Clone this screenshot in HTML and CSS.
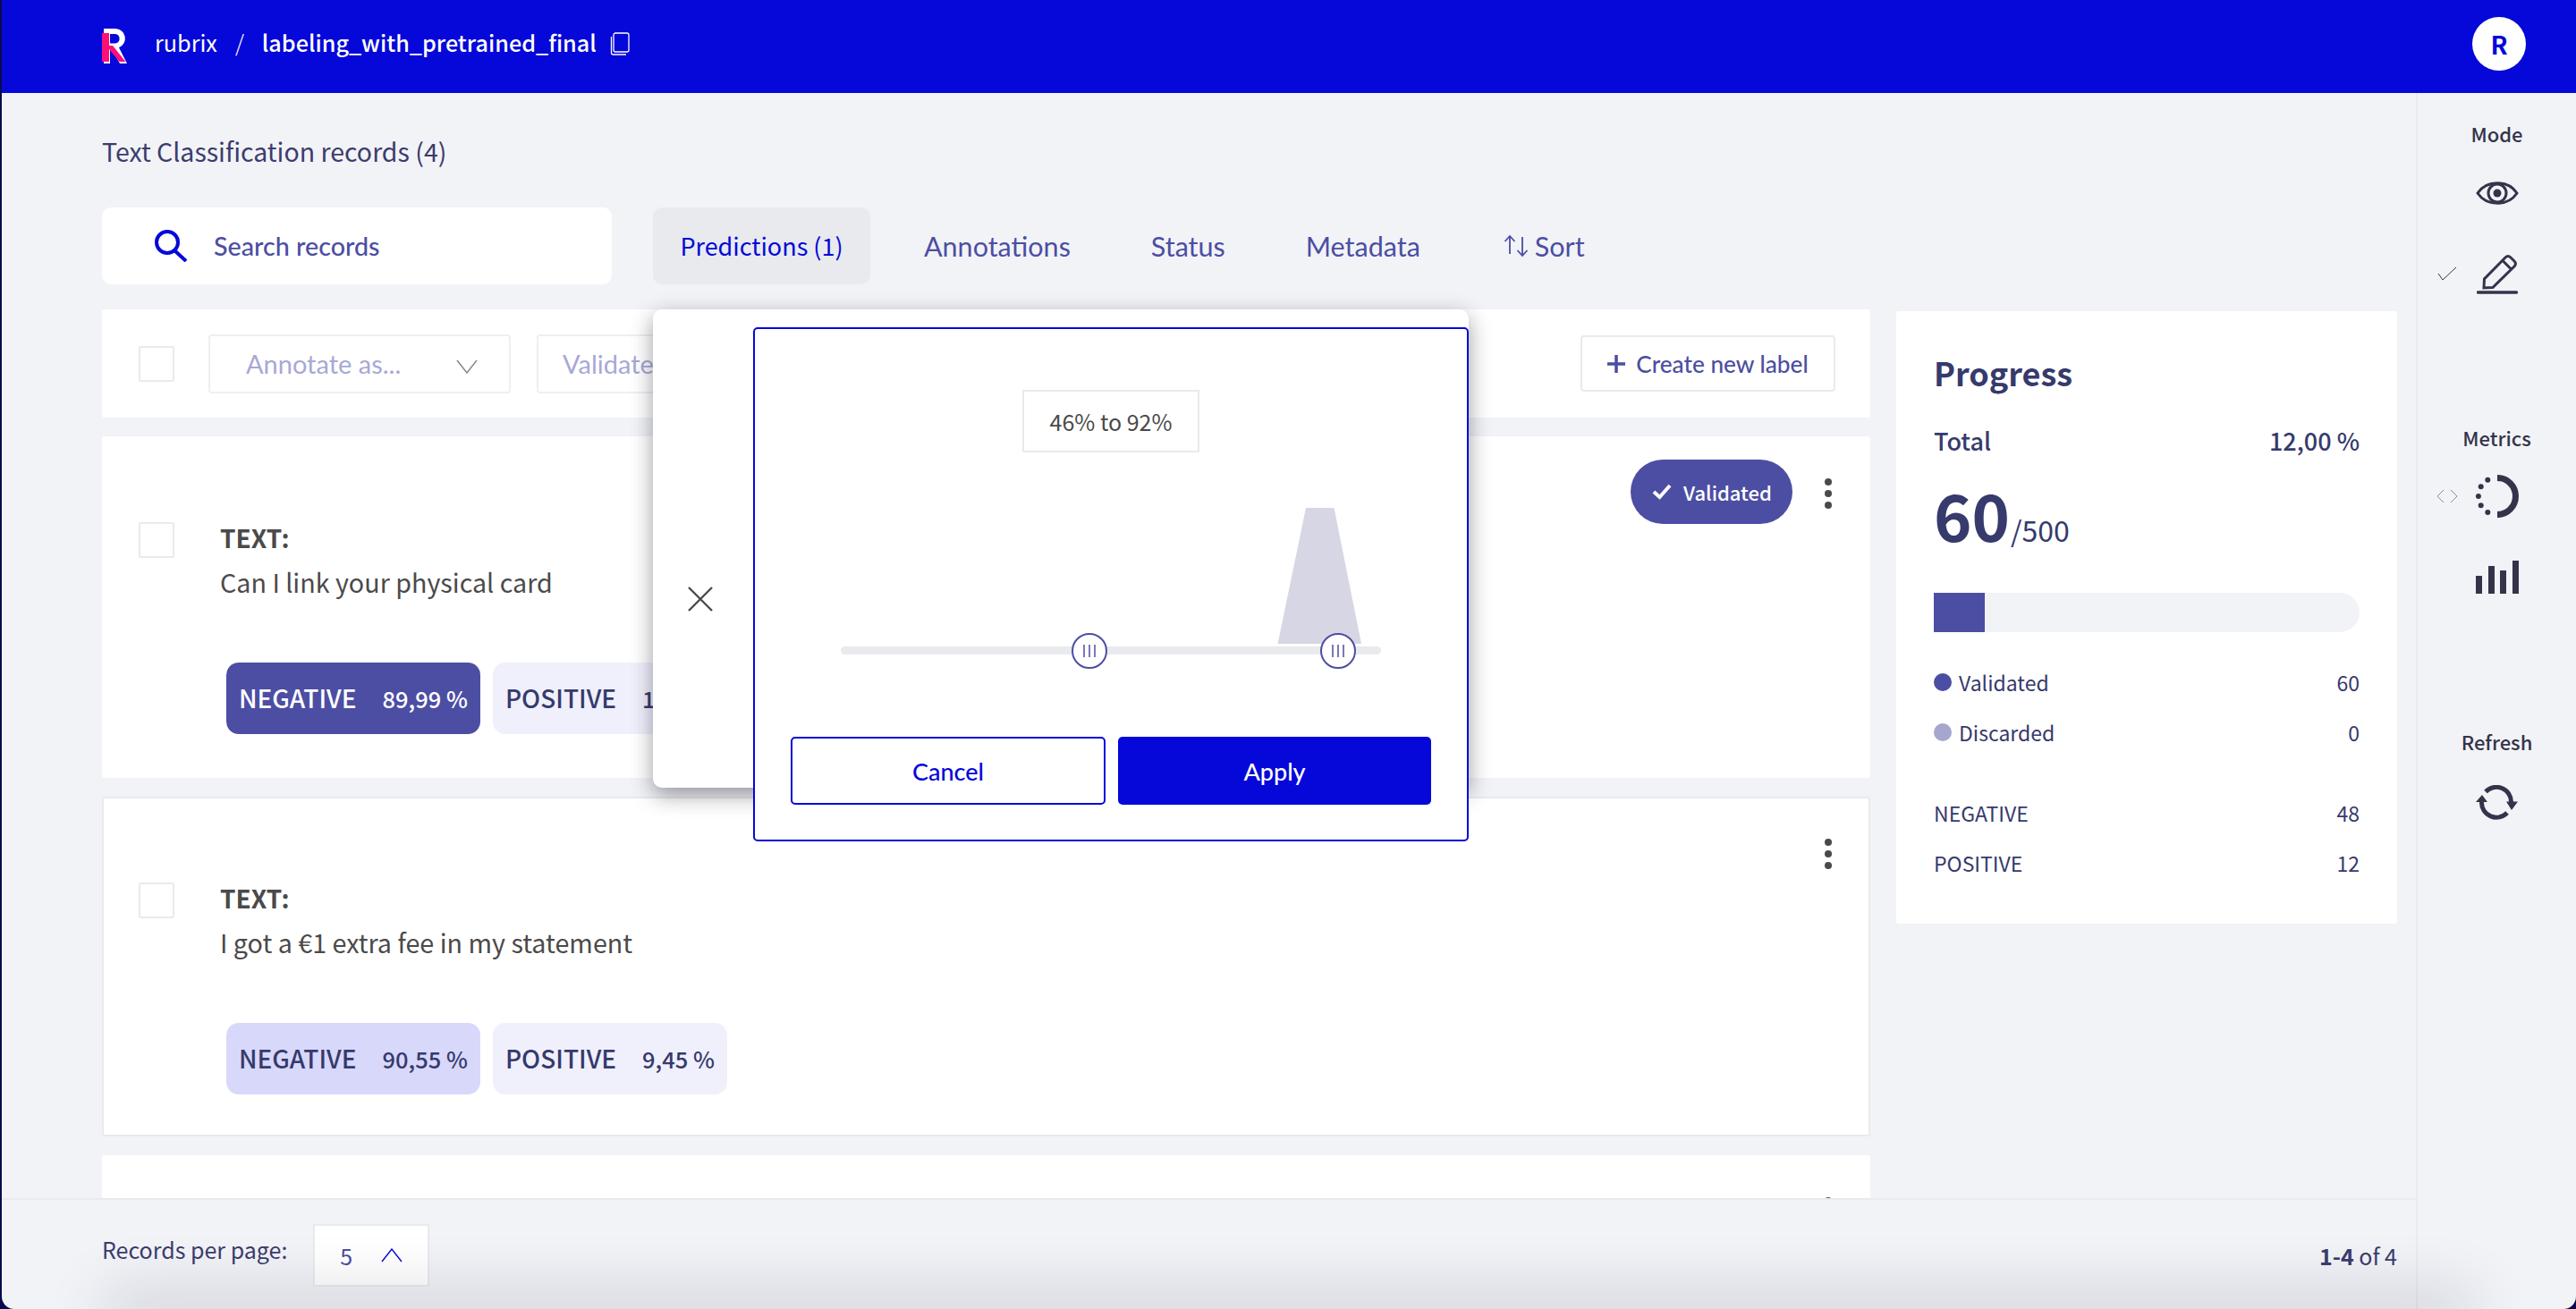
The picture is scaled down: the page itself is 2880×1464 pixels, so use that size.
FILE: index.html
```html
<!DOCTYPE html>
<html lang="en">
<head>
<meta charset="utf-8">
<title>rubrix</title>
<link rel="stylesheet" href="styles.css">
</head>
<body>
<div class="app">
  <header class="topbar">
    <svg class="logo" width="30" height="40" viewBox="0 0 30 40"><path fill="#fff" fill-rule="evenodd" d="M3 0H16a11 11 0 0 1 4 21.2L29 39H21L11.500 22H10V39H3ZM10 6V16.500H16a5.300 5.300 0 0 0 0-10.500Z"/><path fill="#ff0f78" d="M1 5H9V37H1ZM9 19H13L27.500 37H20.500L9 23Z"/></svg>
    <span class="crumb">rubrix</span>
    <span class="crumb slash">/</span>
    <span class="crumb strong">labeling_with_pretrained_final</span>
    <svg class="copy" width="22" height="26" viewBox="0 0 22 26" fill="none" stroke="#fff" stroke-width="1.300"><rect x="4" y="1" width="17" height="21" rx="2"/><path d="M1.500 5V23a2 2 0 0 0 2 2H18"/></svg>
    <span class="avatar">R</span>
  </header>
  <div class="layout">
    <main class="main">
      <div class="content">
        <h1 class="title">Text Classification records (4)</h1>
        <div class="filters">
          <div class="search">
            <svg width="38" height="36" viewBox="0 0 38 36" fill="none" stroke="#0508d9" stroke-width="4"><circle cx="15" cy="14" r="12"/><path d="M23 23L36 35"/></svg>
            <span>Search records</span>
          </div>
          <span class="filter active">Predictions (1)</span>
          <span class="filter">Annotations</span>
          <span class="filter">Status</span>
          <span class="filter">Metadata</span>
          <span class="filter sort">
            <svg width="28" height="26" viewBox="0 0 28 26" fill="none" stroke="#4c4ea3" stroke-width="1.800"><path d="M7 22V2M1.500 8L7 2L12.500 8M21 3V24M15.500 18L21 24L26.500 18"/></svg>
            Sort
          </span>
        </div>
        <div class="columns">
          <div class="list">
            <div class="toolbar">
              <span class="check"></span>
              <div class="select annotate"><span>Annotate as...</span>
                <svg class="chev" width="24" height="16" viewBox="0 0 24 16" fill="none" stroke="#888" stroke-width="1.500"><path d="M1 1L12 15L23 1"/></svg>
              </div>
              <div class="select validate"><span>Validate</span></div>
              <div class="create"><svg width="20" height="20" viewBox="0 0 20 20" fill="none" stroke="#4c4ea3" stroke-width="3.500"><path d="M10 0V20M0 10H20"/></svg><span>Create new label</span></div>
            </div>
            <article class="record first">
              <span class="check"></span>
              <div class="record-body">
                <div class="field">TEXT:</div>
                <div class="value">Can I link your physical card</div>
                <div class="chips">
                  <span class="chip on"><b>NEGATIVE</b><i>89,99 %</i></span>
                  <span class="chip"><b>POSITIVE</b><i>10,01 %</i></span>
                </div>
              </div>
              <div class="actions">
                <span class="pill"><svg width="22" height="18" viewBox="0 0 22 18" fill="none" stroke="#fff" stroke-width="4"><path d="M2 9L8.500 15L20 2"/></svg>Validated</span>
                <span class="dots"><i></i><i></i><i></i></span>
              </div>
            </article>
            <article class="record second">
              <span class="check"></span>
              <div class="record-body">
                <div class="field">TEXT:</div>
                <div class="value">I got a €1 extra fee in my statement</div>
                <div class="chips">
                  <span class="chip mid"><b>NEGATIVE</b><i>90,55 %</i></span>
                  <span class="chip"><b>POSITIVE</b><i>9,45 %</i></span>
                </div>
              </div>
              <div class="actions">
                <span class="dots"><i></i><i></i><i></i></span>
              </div>
            </article>
            <article class="record third">
              <div class="actions">
                <span class="dots"><i></i><i></i><i></i></span>
              </div>
            </article>
          </div>
          <aside class="progress">
            <h2>Progress</h2>
            <div class="row total"><span>Total</span><span>12,00 %</span></div>
            <div class="count"><b>60</b><span>/500</span></div>
            <div class="bar"><div class="bar-fill"></div></div>
            <div class="row stat"><span class="legend"><i class="dot"></i>Validated</span><span>60</span></div>
            <div class="row stat"><span class="legend"><i class="dot light"></i>Discarded</span><span>0</span></div>
            <div class="row stat labels"><span>NEGATIVE</span><span>48</span></div>
            <div class="row stat"><span>POSITIVE</span><span>12</span></div>
          </aside>
        </div>
      </div>
      <footer class="footer">
        <span class="per-page">Records per page:</span>
        <div class="page-select"><span>5</span>
          <svg width="24" height="16" viewBox="0 0 24 16" fill="none" stroke="#0508d9" stroke-width="1.400"><path d="M1 15L12 1L23 15"/></svg>
        </div>
        <span class="pager"><b>1-4</b> of 4</span>
      </footer>
    </main>
    <aside class="sidebar">
      <span class="side-label">Mode</span>
      <svg class="eye" width="48" height="28" viewBox="0 0 48 28" fill="none" stroke="#33344a" stroke-width="3"><path d="M2 14C12 -1 36 -1 46 14C36 29 12 29 2 14Z"/><circle cx="24" cy="14" r="10"/><circle cx="24" cy="14" r="4.500" fill="#33344a" stroke="none"/></svg>
      <div class="side-icon pencil">
        <svg class="mark" width="22" height="16" viewBox="0 0 22 16" fill="none" stroke="#33344a" stroke-width="1"><path d="M1 8L6 15L21 1"/></svg>
        <svg width="46" height="46" viewBox="0 0 46 46" fill="none" stroke="#33344a" stroke-width="3"><path d="M8 39L8.500 29L32 5Q35 2 38 5L42 9Q45 12 42 15L18 38.500ZM29 8.500L38.500 18"/><path d="M1.500 44H44.500" stroke-width="3.500" stroke-linecap="round"/></svg>
      </div>
      <span class="side-label metrics">Metrics</span>
      <div class="side-icon ring">
        <svg class="mark code" width="24" height="16" viewBox="0 0 24 16" fill="none" stroke="#8a8a98" stroke-width="1"><path d="M8 1L1 8L8 15M16 1L23 8L16 15"/></svg>
        <svg width="48" height="48" viewBox="0 0 48 48" fill="#33344a"><path d="M24 3.500A20.500 20.500 0 0 1 24 44.500" fill="none" stroke="#33344a" stroke-width="7"/><circle cx="13.300" cy="5.700" r="3"/><circle cx="5.700" cy="13.300" r="3"/><circle cx="2.900" cy="24" r="3"/><circle cx="5.700" cy="34.300" r="3"/><circle cx="13.300" cy="42" r="3"/></svg>
      </div>
      <svg class="bars" width="48" height="37" viewBox="0 0 48 37" fill="#33344a"><rect x="0" y="17" width="7" height="20"/><rect x="14" y="6" width="7" height="31"/><rect x="27" y="11" width="7" height="26"/><rect x="41" y="0" width="7" height="37"/></svg>
      <span class="side-label refresh">Refresh</span>
      <svg class="refresh-icon" width="48" height="40" viewBox="0 0 48 40" fill="none" stroke="#33344a" stroke-width="5"><path d="M11 7.500A16.500 16.500 0 0 1 39.500 19"/><path d="M6.500 19A16.500 16.500 0 0 0 35 31"/><path fill="#33344a" stroke="none" d="M0 19H13L7 11ZM34 18.500H47L40 28Z"/></svg>
    </aside>
  </div>
  <section class="popup">
    <svg class="close" width="28" height="28" viewBox="0 0 28 28" fill="none" stroke="#4a4a4a" stroke-width="2.400"><path d="M1 1L27 27M27 1L1 27"/></svg>
    <div class="range">
      <div class="range-value">46% to 92%</div>
      <svg class="chart" width="604" height="182" viewBox="0 0 604 182">
        <polygon points="520,0 551.500,0 582,152 488.500,152" fill="#d7d6e4"/>
        <rect x="0" y="155" width="604" height="9" rx="4.500" fill="#e9eaee"/>
        <g fill="#fff" stroke="#4c4ea3" stroke-width="2">
          <circle cx="278" cy="160" r="19"/><circle cx="556" cy="160" r="19"/>
        </g>
        <path d="M272 153V167M278 153V167M284 153V167M550 153V167M556 153V167M562 153V167" stroke="#4c4ea3" stroke-width="1.500" fill="none"/>
      </svg>
      <div class="range-buttons">
        <span class="btn cancel">Cancel</span>
        <span class="btn apply">Apply</span>
      </div>
    </div>
  </section>
  <div class="bottom-shade"></div>
</div>
</body>
</html>
```
FILE: styles.css
```css
* { box-sizing: border-box; }
html, body { margin: 0; height: 100%; }
body {
  background: #0a0a4e;
  overflow: hidden;
  font-family: "Noto Sans CJK SC", "Source Sans Pro", "Noto Sans", sans-serif;
  color: #363a6c;
}
.app {
  position: relative;
  margin-left: 2px;
  height: 1464px;
  display: flex;
  flex-direction: column;
  background: #f2f3f7;
  overflow: hidden;
  border-radius: 0 0 14px 14px;
}

/* top bar */
.topbar {
  flex: 0 0 104px;
  display: flex;
  align-items: center;
  padding: 0 0 6px 111px;
  background: #0508d9;
  color: #fff;
}
.logo { margin-right: 30px; margin-top: 6px; }
.crumb { margin-top: -4px; font-size: 25.200px; line-height: 40px; color: #fff; font-weight: 400; }
.slash { margin-left: 20px; margin-right: 20px; font-weight: 300; }
.strong { font-weight: 500; }
.copy { margin-left: 15px; }
.avatar {
  margin-left: auto;
  margin-right: 56px;
  width: 60px;
  height: 60px;
  border-radius: 50%;
  background: #fff;
  color: #0508d9;
  font-size: 28px;
  font-weight: 700;
  line-height: 60px;
  text-align: center;
}

/* main */
.layout { flex: 1; display: flex; min-height: 0; }
.main { flex: 1; min-width: 0; display: flex; flex-direction: column; }
.content { flex: 1; min-height: 0; overflow: hidden; padding: 45px 21px 0 112px; }
.title { margin: 0; font-size: 28.500px; line-height: 40px; font-weight: 400; color: #3b3c6e; }
.filters { margin-top: 43px; height: 86px; display: flex; align-items: center; font-family: Lato, "Noto Sans", sans-serif; }
.search {
  width: 570px;
  height: 86px;
  padding-left: 58px;
  display: flex;
  align-items: center;
  gap: 29px;
  background: #fff;
  border-radius: 10px;
  font-size: 28.700px;
  font-weight: 500;
  color: #4c4ea3;
}
.filter {
  font-size: 30.500px;
  line-height: 86px;
  color: #4c4ea3;
  margin-left: 90px;
  white-space: nowrap;
  display: flex;
  align-items: center;
}
.filter.active {
  margin-left: 46px;
  width: 243px;
  justify-content: center;
  background: #e9eaee;
  border-radius: 10px;
  color: #0508d9;
  font-family: "Noto Sans CJK SC", sans-serif;
  font-size: 27px;
}
.filter.active + .filter { margin-left: 60px; }
.filter.sort { margin-left: 93px; gap: 7px; }
.columns {
  margin-top: 28px;
  display: grid;
  grid-template-columns: 1977px 560px;
  column-gap: 29px;
  align-items: start;
}
.list { display: grid; row-gap: 21px; }

/* toolbar */
.toolbar {
  height: 121px;
  padding: 0 39px 0 41px;
  display: flex;
  align-items: center;
  background: #fff;
  border-radius: 3px;
  font-family: Lato, "Noto Sans", sans-serif;
}
.check {
  flex: 0 0 40px;
  width: 40px;
  height: 40px;
  border: 2px solid #e9eaee;
  border-radius: 2px;
  background: #fff;
}
.select {
  height: 66px;
  display: flex;
  align-items: center;
  justify-content: space-between;
  border: 2px solid #eeeff3;
  border-radius: 4px;
  font-size: 29px;
  color: #a7a8d6;
}
.annotate { width: 338px; margin-left: 38px; padding: 0 35px 0 40px; }
.chev { margin-top: 6px; }
.validate { width: 300px; margin-left: 29px; padding-left: 27px; }
.create {
  margin-left: auto;
  width: 285px;
  height: 63px;
  display: flex;
  align-items: center;
  justify-content: center;
  gap: 12px;
  border: 2px solid #e9eaee;
  border-radius: 4px;
  font-size: 26.200px;
  font-weight: 500;
  color: #4c4ea3;
}

/* records */
.record {
  position: relative;
  display: flex;
  align-items: flex-start;
  background: #fff;
  border-radius: 3px;
  padding-left: 41px;
}
.record .check { margin-top: 96px; }
.record.first { height: 382px; }
.record.second { height: 380px; border: 2px solid #e9eaee; padding-left: 39px; }
.record.second .check { margin-top: 94px; }
.record.third { height: 60px; justify-content: flex-end; }
.record-body { flex: 1; padding: 93px 0 0 51px; }
.second .record-body { padding-top: 91px; }
.field { font-size: 28px; line-height: 40px; font-weight: 700; color: #4a4a4a; }
.value { margin-top: 10px; font-size: 28.700px; line-height: 40px; color: #4a4a4a; }
.chips { margin-top: 70px; margin-left: 7px; display: flex; gap: 14px; }
.chip {
  height: 80px;
  padding: 0 14px 2px;
  display: flex;
  align-items: center;
  gap: 29px;
  background: #f0f0fc;
  border-radius: 14px;
  font-size: 28px;
  color: #363a6c;
  white-space: nowrap;
}
.chip b { font-weight: 500; }
.chip i { font-style: normal; font-weight: 500; font-size: 25.500px; }
.chip.on { background: #4c4ea3; color: #fff; }
.chip.mid { background: #d8d8fb; }
.actions {
  height: 72px;
  margin-top: 26px;
  margin-right: 43px;
  display: flex;
  align-items: center;
  gap: 36px;
}
.second .actions { margin-top: 24px; margin-right: 41px; }
.pill {
  width: 181px;
  height: 72px;
  padding-left: 24px;
  display: flex;
  align-items: center;
  gap: 13px;
  background: #4c4ea3;
  border-radius: 36px;
  color: #fff;
  font-size: 22px;
  font-weight: 500;
}
.dots { margin-top: 3px; display: flex; flex-direction: column; gap: 5px; }
.dots i { width: 8px; height: 8px; border-radius: 50%; background: #4a4a4a; }

/* progress */
.progress {
  margin-top: 2px;
  height: 685px;
  padding: 42px 42px 0 42px;
  background: #fff;
  border-radius: 3px;
}
.progress h2 { margin: 0; font-size: 36px; line-height: 52px; font-weight: 700; color: #363a6c; }
.row { display: flex; justify-content: space-between; align-items: center; }
.total { margin-top: 33px; font-size: 27px; line-height: 36px; font-weight: 500; }
.count { margin-top: 22px; height: 84px; display: flex; align-items: baseline; line-height: 84px; }
.count b { font-size: 72px; font-weight: 700; }
.count span { font-size: 32px; margin-left: 1px; }
.bar { margin-top: 46px; height: 44px; border-radius: 0 22px 22px 0; background: #f2f3f7; overflow: hidden; }
.bar-fill { width: 57px; height: 100%; background: #4c4ea3; }
.stat { font-size: 23px; line-height: 36px; }
.bar + .stat { margin-top: 38px; }
.stat + .stat { margin-top: 20px; }
.stat.labels { margin-top: 54px; }
.legend { display: flex; align-items: center; gap: 8px; }
.dot { width: 20px; height: 20px; border-radius: 50%; background: #4c4ea3; }
.dot.light { background: #a6a6ce; }

/* footer */
.footer {
  flex: 0 0 124px;
  display: flex;
  align-items: flex-start;
  padding: 27px 21px 0 112px;
  border-top: 2px solid #e9eaee;
}
.per-page { margin-top: 8px; font-size: 25px; line-height: 40px; color: #3b3c6e; }
.page-select {
  margin-left: 29px;
  width: 130px;
  height: 70px;
  padding: 0 28px;
  display: flex;
  align-items: center;
  justify-content: space-between;
  background: #fff;
  border: 2px solid #e9eaee;
  color: #4c4ea3;
  font-size: 25px;
}
.pager { margin-left: auto; margin-top: 15px; font-size: 25px; line-height: 40px; color: #3b3c6e; }
.pager b { font-weight: 700; }

/* right rail */
.sidebar {
  flex: 0 0 179px;
  padding-top: 29px;
  display: flex;
  flex-direction: column;
  align-items: center;
  border-left: 2px solid #e9eaee;
  color: #33344a;
}
.side-label { font-size: 22px; line-height: 32px; font-weight: 500; color: #33344a; }
.eye { margin-top: 37px; }
.side-icon { position: relative; height: 46px; }
.pencil { margin-top: 53px; }
.ring { margin-top: 26px; height: 48px; }
.mark { position: absolute; left: -44px; top: 15px; }
.code { top: 16px; left: -44px; }
.metrics { margin-top: 144px; }
.bars { margin-top: 48px; }
.refresh { margin-top: 149px; }
.refresh-icon { margin-top: 33px; }

/* range popup */
.popup {
  position: absolute;
  left: 728px;
  top: 346px;
  width: 912px;
  height: 535px;
  background: #fff;
  border-radius: 10px;
  box-shadow: 0 8px 24px rgba(20, 20, 30, .42);
}
.close { position: absolute; left: 39px; top: 310px; }
.range {
  position: absolute;
  left: 112px;
  top: 20px;
  width: 800px;
  height: 575px;
  padding-top: 68px;
  display: flex;
  flex-direction: column;
  align-items: center;
  background: #fff;
  border: 2px solid #0508d9;
  border-radius: 5px;
}
.range-value {
  width: 198px;
  height: 70px;
  border: 2px solid #e9eaee;
  font-size: 25px;
  line-height: 66px;
  text-align: center;
  color: #4a4a4a;
}
.chart { margin-top: 62px; flex: none; }
.range-buttons { margin-top: 74px; display: flex; gap: 14px; align-self: flex-start; margin-left: 40px; font-family: Lato, "Noto Sans", sans-serif; }
.btn {
  height: 76px;
  display: flex;
  align-items: center;
  justify-content: center;
  border-radius: 5px;
  font-size: 27px;
  font-weight: 500;
}
.cancel { width: 352px; border: 2px solid #0508d9; color: #0508d9; background: #fff; }
.apply { width: 350px; background: #0508d9; color: #fff; }

/* soft shade along the window edge */
.bottom-shade {
  position: absolute;
  left: 130px;
  right: 130px;
  top: 1464px;
  height: 10px;
  box-shadow: 0 0 70px 14px rgba(20, 20, 40, .2);
}
```
